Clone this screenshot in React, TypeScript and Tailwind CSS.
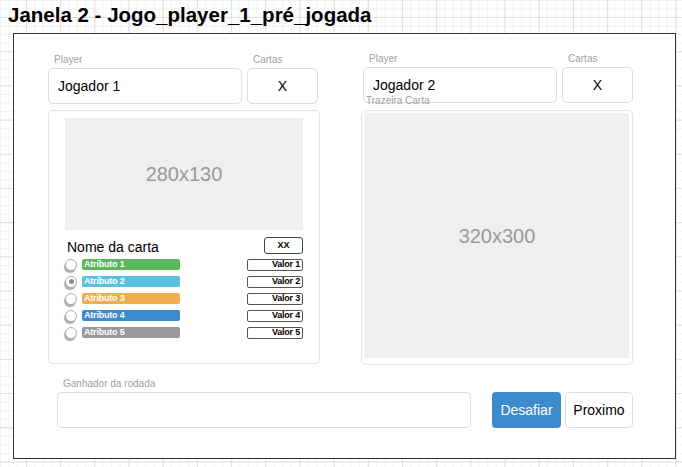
import React from "react";

const font = "font-['Liberation_Sans',Arial,Helvetica,sans-serif]";

const ATTRIBUTES = [
  { name: "Atributo 1", value: "Valor 1", color: "bg-[#5cb85c]" },
  { name: "Atributo 2", value: "Valor 2", color: "bg-[#5bc0de]", checked: true },
  { name: "Atributo 3", value: "Valor 3", color: "bg-[#f0ad4e]" },
  { name: "Atributo 4", value: "Valor 4", color: "bg-[#3d8bcd]" },
  { name: "Atributo 5", value: "Valor 5", color: "bg-[#999999]" },
];

function Label({ children }: { children: React.ReactNode }) {
  return <div className="pl-[6px] text-[10px] leading-[12px] text-[#a0a0a0]">{children}</div>;
}

function Field({ children, className = "" }: { children?: React.ReactNode; className?: string }) {
  return (
    <div
      className={`flex h-[36px] items-center rounded-[5px] border border-[#dedede] bg-white text-[14px] text-black ${className}`}
    >
      {children}
    </div>
  );
}

function PlayerRow({ name }: { name: string }) {
  return (
    <div className="flex gap-[5px]">
      <div className="flex w-[194px] flex-col gap-[2px]">
        <Label>Player</Label>
        <Field className="pl-[9px]">{name}</Field>
      </div>
      <div className="flex w-[71px] flex-col gap-[2px]">
        <Label>Cartas</Label>
        <Field className="justify-center">X</Field>
      </div>
    </div>
  );
}

function Radio({ checked }: { checked?: boolean }) {
  return (
    <span className="flex h-[12px] w-[12px] shrink-0 items-center justify-center rounded-full border border-[#b0b0b0] bg-white shadow-[-1px_2px_1px_#aaaaaa]">
      {checked && <span className="h-[5px] w-[5px] rounded-full bg-[#8a8a8a]" />}
    </span>
  );
}

function Placeholder({ text, className }: { text: string; className: string }) {
  return (
    <div className={`flex items-center justify-center bg-[#efefef] text-[20px] text-[#9a9a9a] ${className}`}>
      {text}
    </div>
  );
}

export default function App() {
  return (
    <div
      className={`${font} min-h-screen w-full bg-white bg-[linear-gradient(to_right,#e0e0e0_1px,transparent_1px),linear-gradient(to_bottom,#e0e0e0_1px,transparent_1px),linear-gradient(to_right,#f1f1f1_1px,transparent_1px),linear-gradient(to_bottom,#f1f1f1_1px,transparent_1px)] bg-[size:34.2px_34.2px,34.2px_34.2px,8.55px_8.55px,8.55px_8.55px] bg-[position:26px_17px,26px_17px,0px_0px,0px_0px]`}
    >
      <h1 className="pl-[8px] pt-[3px] text-[20.5px] font-bold leading-[23px] text-black">
        Janela 2 - Jogo_player_1_pré_jogada
      </h1>

      {/* Window frame */}
      <div className="ml-[13px] mt-[7px] h-[426px] w-[663px] border border-[#333] bg-white pl-[34px] pr-[42px]">
        <div className="flex gap-[41px]">
          {/* Player 1 */}
          <div className="flex w-[272px] flex-col pt-[20px]">
            <PlayerRow name="Jogador 1" />
            <div className="mt-[6px] flex h-[254px] flex-col rounded-[5px] border border-[#e3e3e3] px-[16px] pt-[7px]">
              <Placeholder text="280x130" className="h-[112px] w-full" />
              <div className="mt-[7px] flex h-[17px] items-end justify-between">
                <span className="pl-[2px] text-[14px] leading-[14px] text-black">Nome da carta</span>
                <span className="flex h-[17px] w-[39px] items-center justify-center rounded-[3px] border border-[#444] text-[9px] font-bold">
                  XX
                </span>
              </div>
              <div className="mt-[5px] flex flex-col gap-[6px]">
                {ATTRIBUTES.map((a) => (
                  <div key={a.name} className="flex h-[11px] items-center">
                    <Radio checked={a.checked} />
                    <span
                      className={`ml-[5px] flex h-[11px] w-[98px] items-center rounded-[2px] pl-[2px] text-[9px] font-bold leading-none tracking-[-0.2px] text-white ${a.color}`}
                    >
                      {a.name}
                    </span>
                    <span className="ml-auto flex h-[12px] w-[56px] items-center justify-end rounded-[2px] border border-[#555] pr-[2px] text-[9px] font-bold leading-none tracking-[-0.2px] text-black">
                      {a.value}
                    </span>
                  </div>
                ))}
              </div>
            </div>
          </div>

          {/* Player 2 */}
          <div className="flex w-[272px] flex-col pt-[19px]">
            <div className="pl-[2px]">
              <PlayerRow name="Jogador 2" />
            </div>
            <div className="relative mt-[7px] h-[255px] rounded-[5px] border border-[#e3e3e3] px-[3px] pt-[2px]">
              <span className="absolute left-[4px] top-[-16px] z-10 text-[10px] leading-[12px] text-[#a0a0a0]">
                Trazeira Carta
              </span>
              <Placeholder text="320x300" className="h-[245px] w-full" />
            </div>
          </div>
        </div>

        {/* Round winner + actions */}
        <div className="mt-[13px] flex items-end pl-[9px]">
          <div className="flex w-[414px] flex-col gap-[2px]">
            <Label>Ganhador da rodada</Label>
            <Field />
          </div>
          <button className="ml-[21px] h-[36px] w-[69px] rounded-[4px] bg-[#3d8bcd] text-[14px] text-white">
            Desafiar
          </button>
          <button className="ml-[4px] h-[36px] w-[68px] rounded-[4px] border border-[#dedede] bg-white text-[14px] text-black">
            Proximo
          </button>
        </div>
      </div>
    </div>
  );
}
